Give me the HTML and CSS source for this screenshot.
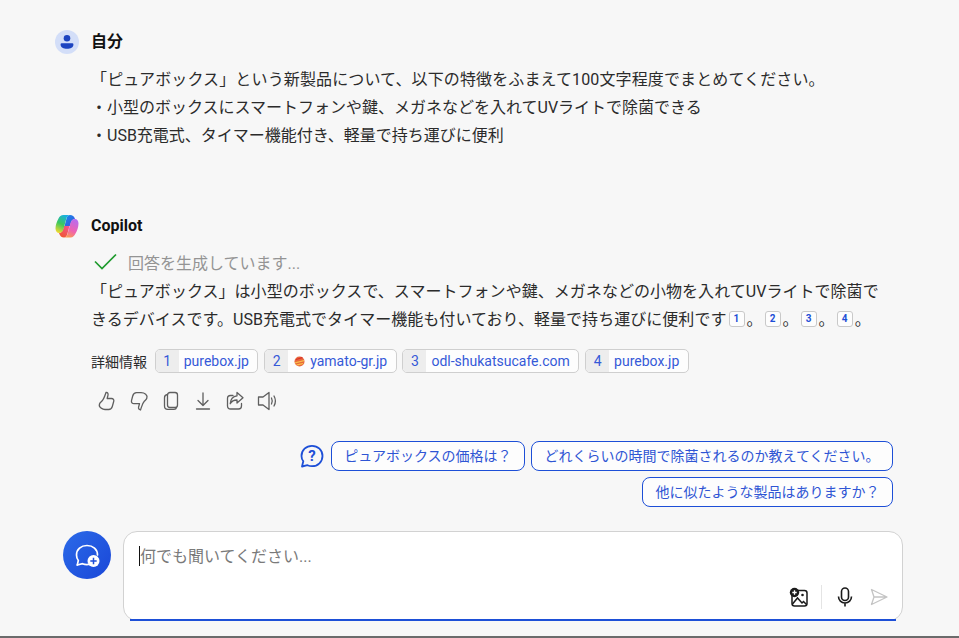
FILE: index.html
```html
<!DOCTYPE html>
<html lang="ja">
<head>
<meta charset="utf-8">
<title>Copilot</title>
<link rel="stylesheet" href="styles.css">
</head>
<body>
<main class="page">
  <section class="turn user-turn">
    <header class="who">
      <span class="avatar user-avatar">
        <svg width="18" height="18" viewBox="0 0 18 18"><circle cx="9" cy="5.200" r="3.300" fill="#1d44c0"/><path d="M3.600 10.200h10.800a1 1 0 0 1 1 1v.6c0 2.600-2.900 4-6.400 4s-6.400-1.400-6.400-4v-.6a1 1 0 0 1 1-1z" fill="#1d44c0"/></svg>
      </span>
      <span class="name">自分</span>
    </header>
    <div class="user-text">
      <p class="user-first">「ピュアボックス」という新製品について、以下の特徴をふまえて100文字程度でまとめてください。</p>
      <p>・小型のボックスにスマートフォンや鍵、メガネなどを入れてUVライトで除菌できる</p>
      <p>・USB充電式、タイマー機能付き、軽量で持ち運びに便利</p>
    </div>
  </section>

  <section class="turn bot-turn">
    <header class="who">
      <span class="avatar">
        <svg width="24" height="24" viewBox="0 0 24 24">
          <defs>
            <linearGradient id="cpA" x1="0.6" y1="0" x2="0.2" y2="1"><stop offset="0" stop-color="#17b0e0"/><stop offset="0.5" stop-color="#3cc85c"/><stop offset="1" stop-color="#f6d92e"/></linearGradient>
            <linearGradient id="cpB" x1="0.7" y1="0" x2="0.3" y2="1"><stop offset="0" stop-color="#b76cf0"/><stop offset="0.6" stop-color="#f062b0"/><stop offset="1" stop-color="#fb9a50"/></linearGradient>
            <linearGradient id="cpC" x1="0" y1="0" x2="1" y2="1"><stop offset="0" stop-color="#1590ea"/><stop offset="1" stop-color="#3a4fe0"/></linearGradient>
            <linearGradient id="cpD" x1="0.8" y1="0" x2="0.2" y2="1"><stop offset="0" stop-color="#f2558a"/><stop offset="1" stop-color="#f0562c"/></linearGradient>
          </defs>
          <path d="M15 1c2.500 0 4 1 5 4-2 0-3.500 1.500-4 3.500L15 12H9.500l2-7.500C12 2.500 13 1 15 1z" fill="url(#cpC)"/>
          <path d="M9 23.500c-2.500 0-4-1.500-5-4.500 2 0 3.500-1.500 4-3.500L9 12h5.500l-2 7.500c-.5 2-1.500 4-3.500 4z" fill="url(#cpD)"/>
          <path d="M8.500 1H15c-2 0-3 1.500-3.500 3L8.500 15c-.5 2-2 4-4.500 4-2 0-3.500-2-3.500-4.500C.5 11 2 7 3.500 4.500 4.500 2.500 6 1 8.500 1z" fill="url(#cpA)"/>
          <path d="M15.500 23.500H9c2 0 3-1.500 3.500-3.500l3-11c.5-2 2-4 4.500-4 2 0 3.500 2 3.500 4.500 0 3.500-1.500 7.500-3 10-1 2-2.500 4-5 4z" fill="url(#cpB)"/>
        </svg>
      </span>
      <span class="name">Copilot</span>
    </header>
    <div class="status">
      <svg class="check" width="26" height="18" viewBox="0 0 26 18"><path d="M2 8.500l7 7L23 1.500" fill="none" stroke="#1f9b2e" stroke-width="1.700"/></svg>
      <span>回答を生成しています...</span>
    </div>
    <div class="answer">
      <p>「ピュアボックス」は小型のボックスで、スマートフォンや鍵、メガネなどの小物を入れてUVライトで除菌で</p>
      <p>きるデバイスです。USB充電式でタイマー機能も付いており、軽量で持ち運びに便利です<a class="cite">1</a>。<a class="cite">2</a>。<a class="cite">3</a>。<a class="cite">4</a>。</p>
    </div>
    <div class="sources">
      <span class="sources-label">詳細情報</span>
      <a class="chip"><span class="chip-num">1</span><span class="chip-text">purebox.jp</span></a>
      <a class="chip"><span class="chip-num">2</span><span class="chip-text">
        <svg class="favicon" width="11" height="11" viewBox="0 0 11 11"><circle cx="5.500" cy="5.500" r="5" fill="#e8663a"/><path d="M1 6.200l9-2.200v1.200l-9 2.200zM2 8.500l7.500-1.800-1 1.600-4.800 1.200z" fill="#f7c04a"/><path d="M2 3l6-2 1 1-7 2z" fill="#d9302a"/></svg>yamato-gr.jp</span></a>
      <a class="chip"><span class="chip-num">3</span><span class="chip-text">odl-shukatsucafe.com</span></a>
      <a class="chip"><span class="chip-num">4</span><span class="chip-text">purebox.jp</span></a>
    </div>
    <div class="actions">
      <svg width="20" height="20" viewBox="0 0 20 20"><path d="M9 1.500c1.600-.4 2.400 1 2 2.700-.3 1.200-.6 2.200-.8 3.300h4.300c1.800 0 2.700 1.500 2.200 3l-1.400 5c-.6 2-1.700 3-3.600 3H8c-2 0-3-.8-4-1.500-1.500-1-2-2.500-1.500-4 .4-1.200 1.300-1.800 2.500-3 1.900-1.900 2.600-4.500 4-8.500z"/></svg>
      <svg width="20" height="20" viewBox="0 0 20 20"><path d="M11.500 18.500c-1.500.4-2.300-1-1.900-2.600.3-1.100.7-2.100.9-3.200H5c-1.800 0-2.900-1.400-2.500-3L3.700 5c.6-2 1.800-3.300 3.800-3.300h4.500c2.300 0 3.600.6 4.700 1.500 1.200 1 1.600 2.600 1.100 4-.4 1.200-1.300 1.900-2.500 3.100-1.800 1.800-2.400 4.500-3.800 8.700z"/></svg>
      <svg width="20" height="20" viewBox="0 0 20 20"><rect x="6.500" y="1.500" width="10" height="15" rx="2.500"/><path d="M6.500 3.500c-2 .3-3 1.400-3 3.200v8.300c0 2 1.200 3.300 3.200 3.300h6.300c1.300 0 2.200-.6 2.600-1.800"/></svg>
      <svg width="20" height="20" viewBox="0 0 20 20"><path d="M10 2v12.500M5 9.500l5 5 5-5M3.500 18h13"/></svg>
      <svg width="20" height="20" viewBox="0 0 20 20"><path d="M16.500 12.500v2.500c0 1.800-1.200 3-3 3H5.500c-1.800 0-3-1.200-3-3V7.500c0-1.800 1.200-3 3-3H8"/><path d="M12 1.500l6 5.200-6 5.300V9c-3 0-5.200.9-6.800 3.800C5.500 8.500 8 5.200 12 4.800z"/></svg>
      <svg width="22" height="20" viewBox="0 0 22 20"><path d="M1.500 6h4.500l6-4.500v17L6 14H1.500z"/><path d="M14.500 7c1 2 1 4 0 6M17 5c1.800 3.200 1.800 6.800 0 10"/></svg>
    </div>
  </section>

  <section class="suggest">
    <svg class="suggest-icon" width="24" height="24" viewBox="0 0 24 24"><path d="M2 22.500l1.300-5.200C1.900 15.500 1.500 13.700 1.500 12 1.500 6.200 6.200 1.800 12 1.800S22.500 6.200 22.500 12 17.800 22.200 12 22.200c-1.700 0-3-.3-4.500-1z" fill="none" stroke="#1d4fd7" stroke-width="1.800" stroke-linejoin="round"/><text x="12" y="17" text-anchor="middle" class="suggest-q">?</text></svg>
    <a class="pill">ピュアボックスの価格は？</a>
    <a class="pill">どれくらいの時間で除菌されるのか教えてください。</a>
    <a class="pill">他に似たような製品はありますか？</a>
  </section>

  <section class="composer">
    <button class="new-chat" type="button">
      <svg width="26" height="26" viewBox="0 0 26 26"><path d="M3.300 23l1-4.500C3 16.800 2.500 15 2.500 13c0-5.500 4.500-9.500 10.500-9.500S23.500 7.500 23.500 13" fill="none" stroke="#fff" stroke-width="1.700" stroke-linecap="round"/><path d="M3.300 23l5.200-1.300c2 .8 4 1 6 .7" fill="none" stroke="#fff" stroke-width="1.700" stroke-linecap="round"/><circle cx="19.500" cy="19" r="6" fill="#fff"/><path d="M19.500 15.800v6.400M16.300 19h6.400" stroke="#1d4ed8" stroke-width="1.500"/></svg>
    </button>
    <div class="input-box">
      <div class="input-line"><span class="caret"></span><span class="placeholder">何でも聞いてください...</span></div>
      <div class="tools">
        <svg width="22" height="22" viewBox="0 0 22 22"><rect x="5" y="4.500" width="15" height="15.500" rx="2.500" fill="none" stroke="#1b1b1b" stroke-width="1.500"/><path d="M5.500 18l5-6 4.500 5 1.500-1.500 3 3" fill="none" stroke="#1b1b1b" stroke-width="1.500"/><circle cx="15.500" cy="9" r="1.300" fill="#1b1b1b"/><circle cx="7.500" cy="6.500" r="4.700" fill="#1b1b1b"/><path d="M7.500 4.300v4.400M5.300 6.500h4.400" stroke="#fff" stroke-width="1.300"/></svg>
        <span class="divider"></span>
        <svg width="22" height="22" viewBox="0 0 22 22"><rect x="7.500" y="2" width="7" height="12.500" rx="3.500" fill="none" stroke="#1b1b1b" stroke-width="1.600"/><path d="M4.500 10.500c0 3.800 2.800 6.500 6.500 6.500s6.500-2.700 6.500-6.500M11 17v3.500" fill="none" stroke="#1b1b1b" stroke-width="1.600"/></svg>
        <svg class="send" width="20" height="20" viewBox="0 0 20 20"><path d="M2.500 2.500L18 10 2.500 17.500l2.500-7.500zM5 10h13" fill="none" stroke="#c4c4c4" stroke-width="1.300" stroke-linejoin="round"/></svg>
      </div>
    </div>
  </section>
</main>
</body>
</html>
```

FILE: styles.css
```css
* { box-sizing: border-box; }
html, body { margin: 0; padding: 0; }
body {
  width: 959px;
  height: 638px;
  overflow: hidden;
  background: #f7f7f7;
  font-family: Roboto, "Noto Sans CJK JP", sans-serif;
  color: #2b2b2b;
}
.page {
  height: 638px;
  padding: 29px 56px 0 55px;
  border-bottom: 2px solid #6b6b6b;
  display: flex;
  flex-direction: column;
}
p { margin: 0; }
.who {
  display: flex;
  align-items: center;
  gap: 12px;
  height: 26px;
}
.avatar {
  width: 24px;
  height: 24px;
  display: flex;
  align-items: center;
  justify-content: center;
  flex: none;
}
.user-avatar { border-radius: 50%; background: #d3def8; }
.name {
  font-size: 16px;
  line-height: 22px;
  font-weight: 700;
  color: #111;
  margin-top: -1px;
}
.user-text {
  margin: 11px 0 0 36px;
  font-size: 16px;
  line-height: 28px;
}
.user-first { letter-spacing: .13px; }
.bot-turn { margin-top: 63px; }
.status {
  display: flex;
  align-items: center;
  gap: 9px;
  margin: 9px 0 0 38px;
  height: 28px;
  font-size: 16px;
  color: #949494;
}
.check { flex: none; }
.answer {
  margin: 2px 0 0 36px;
  font-size: 16px;
  line-height: 28px;
  letter-spacing: .04px;
  white-space: nowrap;
}
.cite {
  display: inline-block;
  width: 16px;
  height: 16px;
  margin: 0 2px;
  border: 1px solid #c9c9c9;
  border-radius: 3px;
  background: #fdfdfd;
  color: #1d4fd7;
  font-size: 10px;
  font-weight: 700;
  line-height: 14px;
  text-align: center;
  vertical-align: 3px;
}
.sources {
  display: flex;
  align-items: center;
  gap: 5.750px;
  margin: 15px 0 0 36px;
  height: 24px;
  font-size: 14px;
}
.sources-label { font-size: 14px; margin-right: 2px; color: #2b2b2b; }
.chip {
  display: flex;
  align-items: stretch;
  height: 24px;
  border: 1px solid #cfcfcf;
  border-radius: 5px;
  overflow: hidden;
  background: #fdfdfd;
  color: #3559d8;
}
.chip-num {
  width: 23px;
  background: #ededed;
  text-align: center;
  line-height: 22px;
}
.chip-text {
  display: flex;
  align-items: center;
  padding: 0 8.500px 0 5px;
  line-height: 22px;
}
.favicon { margin: 0 5px 0 1px; }
.actions {
  display: flex;
  align-items: center;
  gap: 12px;
  margin: 16px 0 0 36px;
  height: 24px;
  padding-left: 6px;
}
.actions svg {
  fill: none;
  stroke: #5f5f5f;
  stroke-width: 1.300;
  stroke-linejoin: round;
  stroke-linecap: round;
  flex: none;
}
.suggest {
  margin: 28px 10px 0 auto;
  width: 600px;
  display: flex;
  flex-wrap: wrap;
  justify-content: flex-end;
  align-items: center;
  gap: 6px;
}
.suggest-icon { margin-right: 1px; }
.suggest-q { font: 700 15px Roboto, sans-serif; fill: #1d4fd7; }
.pill {
  height: 30px;
  padding: 0 12.500px;
  border: 1px solid #1d4fd7;
  border-radius: 8px;
  background: #fdfdfd;
  color: #2f55d4;
  font-size: 14px;
  line-height: 28px;
  white-space: nowrap;
}
.composer {
  margin: 24px 0 0 8px;
  display: flex;
  gap: 12px;
  align-items: flex-start;
}
.new-chat {
  width: 48px;
  height: 48px;
  border: 0;
  border-radius: 50%;
  padding: 0;
  display: flex;
  align-items: center;
  justify-content: center;
  background: linear-gradient(130deg, #2b6ae8, #1a47d8);
  flex: none;
}
.input-box {
  position: relative;
  flex: 1;
  height: 90px;
  border: 1px solid #d2d2d2;
  border-radius: 14px;
  background: #fff;
  display: flex;
  flex-direction: column;
  padding: 13px 13px 0 15px;
}
.input-box::after {
  content: "";
  position: absolute;
  left: 6px;
  right: 6px;
  bottom: -1px;
  height: 2px;
  background: #1d4fd7;
}
.input-line {
  display: flex;
  align-items: center;
  height: 22px;
  font-size: 16px;
  color: #7a7a7a;
}
.placeholder { margin-top: -2px; }
.caret { width: 1px; height: 20px; background: #111; flex: none; }
.tools {
  margin-top: auto;
  margin-bottom: 11px;
  display: flex;
  align-items: center;
  justify-content: flex-end;
  gap: 12px;
}
.divider { width: 1px; height: 24px; background: #e4e4e4; }
.send { margin-left: 1px; }
```
